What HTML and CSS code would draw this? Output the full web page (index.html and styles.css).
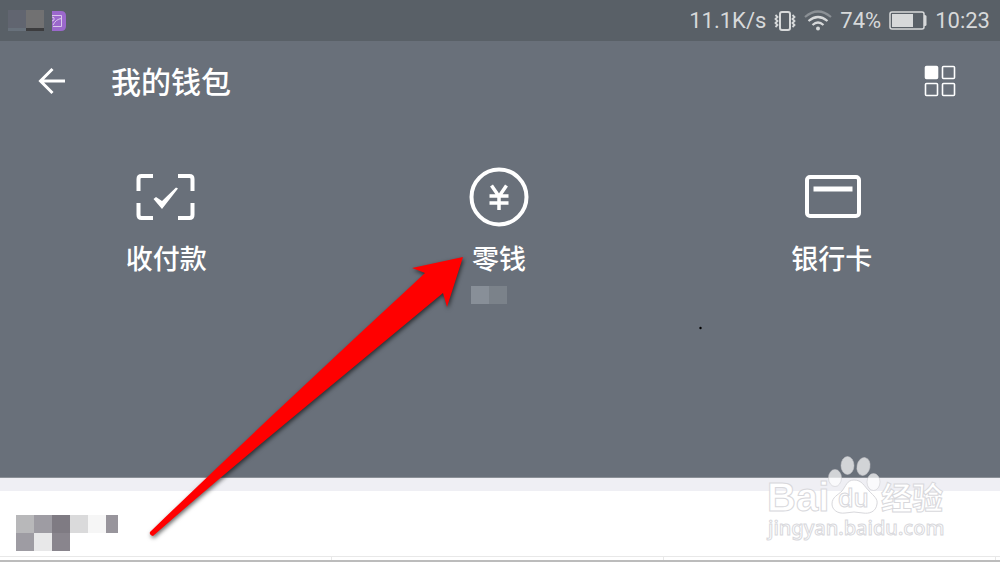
FILE: index.html
```
<!DOCTYPE html>
<html lang="zh-CN">
<head>
    <meta charset="UTF-8">
    <meta name="viewport" content="width=device-width, initial-scale=1.0">
    <title>我的钱包</title>
    <link rel="stylesheet" href="styles.css">
</head>
<body>
    <div class="status-bar">
        <div class="notifications">
            <div class="mask-grey"><i></i><i></i></div>
            <svg class="gallery-icon" width="15" height="20" viewBox="0 0 15 20">
                <path d="M0 0h9q5 0 5 5v10q0 5-5 5H0z" fill="#9b68cc"/>
                <path d="M0 4.500h9.500v11H1M1 14q3-6 8.500-6.500M0 6q3 0 2 3l-2 1" fill="none" stroke="#d9c7ea" stroke-width="1"/>
            </svg>
        </div>
        <div class="indicators">
            <span>11.1K/s</span>
            <svg class="vibrate-icon" width="22" height="20" viewBox="0 0 22 20" fill="none" stroke="#d7d9da">
                <rect x="6" y="1" width="10" height="18" rx="2" stroke-width="2"/>
                <path d="M1.500 4l2 2-2 2 2 2-2 2 2 2-2 2M18.500 4l2 2-2 2 2 2-2 2 2 2-2 2" stroke-width="1.800"/>
            </svg>
            <svg class="wifi-icon" width="28" height="21" viewBox="0 0 28 21" fill="none" stroke="#d7d9da" stroke-width="2.200">
                <path d="M1 7q13-11 26 0" stroke="#8b9095"/>
                <path d="M4.500 11q9.500-8 19 0M8.500 15q5.500-5 11 0"/>
                <circle cx="14" cy="18.500" r="2" fill="#d7d9da" stroke="none"/>
            </svg>
            <span>74%</span>
            <svg class="battery-icon" width="38" height="19" viewBox="0 0 38 19">
                <rect x="1" y="1" width="34" height="17" rx="2" fill="none" stroke="#d7d9da" stroke-width="1.500"/>
                <rect x="3" y="3" width="21" height="13" fill="#d7d9da"/>
                <path d="M35 4h1q1.500 0 1.500 1.500v8q0 1.500-1.500 1.500h-1z" fill="#d7d9da"/>
            </svg>
            <span>10:23</span>
        </div>
    </div>

    <header class="title-bar">
        <button type="button" class="icon-btn" aria-label="返回">
            <svg width="28" height="28" viewBox="0 0 28 28" fill="none" stroke="#fff" stroke-width="3">
                <path d="M15.500 2L3.500 14l12 12M3 14H28"/>
            </svg>
        </button>
        <h1>我的钱包</h1>
        <button type="button" class="icon-btn" aria-label="更多">
            <svg width="32" height="32" viewBox="0 0 32 32" fill="none" stroke="#fff" stroke-width="1.600">
                <rect x="1.500" y="1.500" width="12" height="12" rx="1" fill="#fff"/>
                <rect x="18.500" y="1.500" width="12" height="12" rx="1"/>
                <rect x="1.500" y="18.500" width="12" height="12" rx="1"/>
                <rect x="18.500" y="18.500" width="12" height="12" rx="1"/>
            </svg>
        </button>
    </header>

    <main class="wallet">
        <a class="wallet-item" href="#pay">
            <svg width="60" height="60" viewBox="0 0 60 60">
                <path d="M2.500 24V12q0-3 3-3H17M42 9h11.500q3 0 3 3v12M56.500 36v12q0 3-3 3H42M17 51H5.500q-3 0-3-3V36" fill="none" stroke="#fff" stroke-width="4"/>
                <path d="M17.500 32l2.500-2 6 4L40 20.500l2 1L26 42z" fill="#fff"/>
            </svg>
            <span>收付款</span>
        </a>
        <a class="wallet-item" href="#change">
            <svg width="60" height="60" viewBox="0 0 60 60" fill="none" stroke="#fff">
                <circle cx="30" cy="30" r="27.500" stroke-width="4"/>
                <path d="M22.500 18.500L30 29.500l7.500-11M30 29v14M20.500 29h19M20.500 36h19" stroke-width="3.500"/>
            </svg>
            <span>零钱</span>
            <div class="balance-mask"><i></i><i></i></div>
        </a>
        <a class="wallet-item" href="#cards">
            <svg width="60" height="60" viewBox="0 0 60 60" fill="none" stroke="#fff">
                <rect x="5" y="10" width="52" height="39" rx="3" stroke-width="4"/>
                <path d="M11.500 22h39" stroke-width="5"/>
            </svg>
            <span>银行卡</span>
        </a>
    </main>

    <section class="services">
        <div class="mosaic">
            <i class="c1"></i><i class="c2"></i><i class="c3"></i><i class="c4"></i><i class="c5"></i><i class="c6"></i>
            <i class="c2"></i><i class="c7"></i><i class="c8"></i>
        </div>
    </section>
    <div class="grid-top"><i></i><i></i><i></i></div>

    <!-- pointer to the change entry -->
    <svg class="arrow" viewBox="0 0 1000 562">
        <path class="arrow-shape" d="M463 257L412 268L425 273C340 352 240 445 150 532Q149 535 153 536C245 455 345 375 443 293L447 307z"/>
        <circle cx="700.500" cy="328" r="1.200" fill="#000"/>
    </svg>

    <svg class="watermark" width="200" height="92" viewBox="0 0 200 92">
        <g class="wm-shape">
            <ellipse cx="75" cy="25" rx="6.500" ry="8.500"/>
            <ellipse cx="87.500" cy="12.500" rx="6.500" ry="9"/>
            <ellipse cx="103.500" cy="13.500" rx="6.500" ry="9" transform="rotate(12 103.500 13.500)"/>
            <ellipse cx="113.500" cy="29" rx="6.500" ry="8.500"/>
        </g>
        <path class="wm-outline" d="M94 27c8 0 10 6 15 11s9 8 8 13c-1 8-8 10-14 9q-9-2-18 0c-7 1-13-3-13-9 0-7 6-9 10-13 4-5 5-11 12-11z"/>
        <text class="wm-logo" x="7" y="58">Bai</text>
        <text class="wm-du" x="78" y="54">du</text>
        <text class="wm-cn" x="121" y="56">经验</text>
        <text class="wm-url" x="8" y="82">jingyan.baidu.com</text>
    </svg>
</body>
</html>
```

FILE: styles.css
```
* {
    box-sizing: border-box;
}
body {
    font-family: Roboto, "Noto Sans CJK SC", sans-serif;
    margin: 0;
    min-height: 100vh;
    display: flex;
    flex-direction: column;
    position: relative;
    background-color: #fff;
    color: #fff;
}
svg {
    display: block;
    flex-shrink: 0;
}
i {
    display: block;
}

/* Status bar */
.status-bar {
    display: flex;
    justify-content: space-between;
    align-items: center;
    height: 41px;
    padding: 0 10px 0 8px;
    background-color: #596067;
    color: #d7d9da;
    font-size: 22px;
}
.notifications,
.indicators {
    display: flex;
    align-items: center;
    gap: 8px;
}
.mask-grey {
    display: flex;
}
.mask-grey i {
    width: 18px;
    height: 21px;
    background: #616570;
    border-bottom: 3px solid #68717b;
}
.mask-grey i:last-child {
    background: #717172;
    border-bottom-color: #3c3c3e;
}

/* Title bar */
.title-bar {
    display: flex;
    align-items: center;
    height: 80px;
    padding: 0 44px 0 37px;
    background-color: #69707a;
}
.icon-btn {
    padding: 0;
    border: none;
    background: none;
    cursor: pointer;
}
h1 {
    flex: 1;
    margin: 0 0 0 46px;
    padding-top: 4px;
    font-size: 30px;
    font-weight: 500;
    line-height: 40px;
}

/* Wallet entries */
.wallet {
    flex: 1;
    display: grid;
    grid-template-columns: repeat(3, 1fr);
    align-items: start;
    padding: 46px 2px 0 0;
    background-color: #69707a;
    border-bottom: 1px solid #8b9097;
}
.wallet-item {
    display: flex;
    flex-direction: column;
    align-items: center;
    color: #fff;
    font-size: 27px;
    font-weight: 500;
    line-height: 40px;
    text-decoration: none;
}
.wallet-item span {
    margin-top: 13px;
}
.balance-mask {
    display: flex;
    margin: 6px 20px 0 0;
}
.balance-mask i {
    width: 18px;
    height: 18px;
    background: #888f98;
}
.balance-mask i:last-child {
    background: #7b828a;
}

/* Services below the wallet */
.services {
    padding: 24px 16px 5px;
    border-top: 13px solid #efeff4;
}
.mosaic {
    display: grid;
    grid-template-columns: repeat(5, 18px) 12px;
    grid-auto-rows: 18px;
}
.c1 {
    background: #b8b8ba;
}
.c2 {
    background: #9e9ca3;
}
.c3 {
    background: #7f7b83;
}
.c4 {
    background: #dadadb;
}
.c5 {
    background: #f6f6f6;
}
.c6 {
    background: #98959c;
}
.c7 {
    background: #e8e8e9;
}
.c8 {
    background: #89858d;
}
.grid-top {
    display: grid;
    grid-template-columns: repeat(3, 1fr);
    height: 6px;
    padding-right: 4px;
    border-top: 1px solid #e8e8e8;
    border-bottom: 2px solid #bcbcbc;
}
.grid-top i {
    border-right: 1px solid #e8e8e8;
}

/* Overlays */
.arrow {
    position: absolute;
    top: 0;
    left: 0;
    width: 100%;
    pointer-events: none;
}
.arrow-shape {
    fill: #f00;
    filter: drop-shadow(1px 2px 2px rgba(0, 0, 0, 0.6));
}
.watermark {
    position: absolute;
    right: 40px;
    bottom: 17px;
    pointer-events: none;
    font-family: "Liberation Sans", "Noto Sans CJK SC", sans-serif;
    font-weight: 700;
}
.wm-shape {
    fill: #fff;
    fill-opacity: 0.7;
    stroke: #c8c8cc;
    stroke-opacity: 0.5;
}
.wm-outline,
.wm-logo,
.wm-du,
.wm-cn,
.wm-url {
    fill: #fff;
    stroke: #d8d8dc;
    stroke-width: 1;
}
.wm-logo {
    font-size: 40px;
}
.wm-du {
    font-family: Inter, sans-serif;
    font-size: 25px;
    font-weight: 500;
}
.wm-cn {
    font-size: 31px;
}
.wm-url {
    font-family: "Noto Sans", sans-serif;
    font-size: 20px;
    font-weight: 500;
}
```
